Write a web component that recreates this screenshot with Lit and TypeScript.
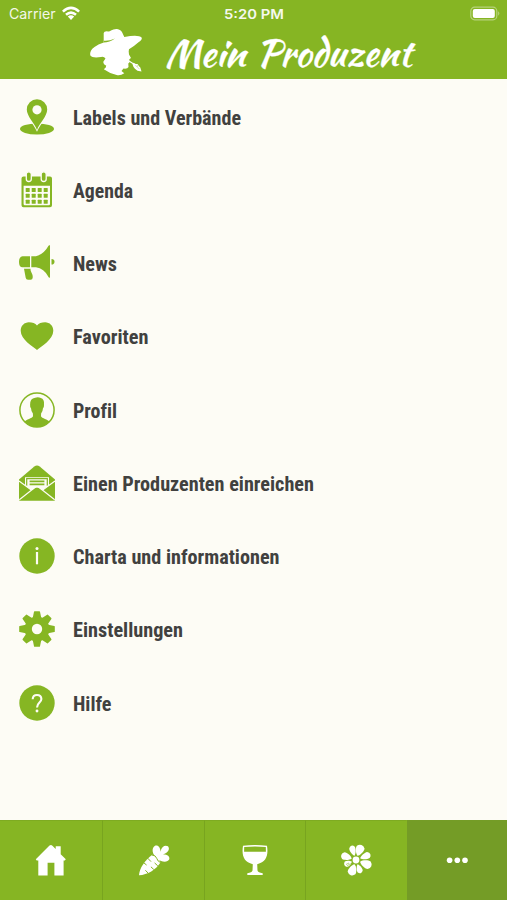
import { LitElement, html, css, svg } from "lit";
import { customElement } from "lit/decorators.js";
import { classMap } from "lit/directives/class-map.js";

const petal = (a: number, l: number, w: number) =>
  svg`<path transform=${`translate(16 16) rotate(${a})`} d=${`M0-4.5C${-w * 0.5}-5.8 ${-w}${-l * 0.68} ${-w * 0.85}${-l * 0.86}Q${-w * 0.5}${-l} 0${-l}Q${w * 0.5}${-l} ${w * 0.85}${-l * 0.86}C${w}${-l * 0.68} ${w * 0.5}-5.8 0-4.5z`}/>`;

const pin = svg`
  <ellipse cx="18" cy="30" rx="17" ry="5.500" fill="#86b623"/>
  <path d="M18 32.800C14.500 24.500 6.500 18 6.500 11.300a11.500 11.500 0 0 1 23 0C29.500 18 21.500 24.500 18 32.800z" fill="#fdfcf5"/>
  <path d="M18 31C15.500 24 7.800 17.500 7.800 10.600a10.200 10.300 0 0 1 20.400 0C28.200 17.500 20.500 24 18 31z" fill="#86b623"/>
  <circle cx="18" cy="10.800" r="4.600" fill="#fdfcf5"/>`;
const calendar = svg`
  <path fill-rule="evenodd" fill="#86b623" d="M5 4.500h26q2 0 2 2V33.300q0 2-2 2H4.500q-2 0-2-2V6.500q0-2 2-2zM4.600 13.700V32q0 1.200 1.200 1.200h24q1.200 0 1.200-1.200V13.700z"/>
  <g fill="#86b623" stroke="#fdfcf5" stroke-width="1.300"><rect x="7.300" y="-.2" width="5" height="9.700" rx="2.500"/><rect x="22.200" y="-.2" width="5" height="9.700" rx="2.500"/></g>
  ${[0, 1, 2].map((r) => [0, 1, 2, 3].map((c) => svg`<rect x=${6.7 + c * 6} y=${15.9 + r * 5.9} width="4" height="4" rx=".5" fill="#86b623"/>`))}`;
const megaphone = svg`<g fill="#86b623">
  <path d="M3.500 11.300H11v11H3.500Q0 22.300 0 17T3.500 11.300z"/>
  <path d="M12.300 11.300H17Q25 9.300 29.500.8Q30-.1 31 .3V32.500Q30 33 29.500 32Q25 23.300 17 22.300h-4.700z"/>
  <path d="M5 23.700h6.500c0 4 2.800 5.200 2.200 9q-.2 2-2 2H9q-2 0-2.300-2z"/>
  <path d="M32.500 14q3 0 3 2.800T32.500 19.600z"/></g>`;
const heart = svg`<path fill="#86b623" d="M18 32C14 28.500 1.700 21.500 1.700 12.700c0-5 3.700-8.500 8.200-8.500q5.400 0 8.100 3.300Q20.700 4.200 26.100 4.200c4.500 0 8.200 3.500 8.200 8.500C34.300 21.500 22 28.500 18 32z"/>`;
const profile = svg`
  <circle cx="18" cy="18" r="17.100" fill="#fdfcf5" stroke="#86b623" stroke-width="1.500"/>
  <path fill="#86b623" d="M5.500 29.800C7 27.300 13.300 26.500 14 24.300L13.900 21.600Q12.200 19.500 12 16.300 10.900 15.500 11.100 12.800 10.900 6.300 16.200 5.700 19.300 4.700 21.800 6.100 25.600 7 25 12.900 25.100 15.500 24 16.300 23.800 19.500 22.100 21.600L22 24.300C22.700 26.500 29 27.300 30.500 29.800 23.500 36.800 12.500 36.800 5.500 29.800z"/>`;
const envelope = svg`
  <path fill="#86b623" d="M0 14.500L15.300 1.600Q18-.6 20.700 1.600L36 14.500V35.500H0z"/>
  <path fill="#fdfcf5" d="M6 12.200H30V21.600L23 25.200H13L6 21.600z"/>
  <path fill="none" stroke="#86b623" stroke-width="1.200" d="M7.700 20.800v-7.200h20.600v7.200"/>
  <path stroke="#86b623" stroke-width="1.700" d="M10.600 16.300h14.800M10.600 19.400h14.800"/>
  <path fill="#86b623" d="M0 16L13 25.500 0 35zM36 16L23 25.500 36 35zM.5 35.500L15.500 23.200Q18 21.200 20.500 23.200L35.500 35.500z"/>
  <path fill="none" stroke="#fdfcf5" stroke-width="1.200" d="M0 16L12.700 25.300M36 16L23.300 25.300M.3 34.800L15.500 22.800Q18 20.800 20.500 22.800L35.700 34.800"/>`;
const info = svg`
  <circle cx="18" cy="18" r="17.700" fill="#86b623"/>
  <circle cx="18" cy="10.600" r="1.500" fill="#fdfcf5"/><path d="M18 14v12.300" stroke="#fdfcf5" stroke-width="2.200"/>`;
const gear = svg`<g fill="#86b623">
  ${[0, 45, 90, 135, 180, 225, 270, 315].map((a) => svg`<path transform=${`rotate(${a} 18 18)`} d="M13.500 8L15 .7Q15.100.2 15.600 .2h4.800q.5 0 .6.500L22.500 8z"/>`)}
  <circle cx="18" cy="18" r="12.400"/></g><circle cx="18" cy="18" r="5.200" fill="#fdfcf5"/>`;
const help = svg`
  <circle cx="18" cy="18" r="17.700" fill="#86b623"/>
  <path fill="none" stroke="#fdfcf5" stroke-width="2.100" d="M13.700 14.200Q13.800 10 18 10t4.400 4.100C22.400 17.500 18 17.700 18 22.400"/>
  <circle cx="18" cy="26" r="1.450" fill="#fdfcf5"/>`;

const home = svg`<path d="M.8 15.300L14.500 1.600Q16 .3 17.400 1.700l3.300 3.200V2.300h5v7.900L30.800 15.300l-1 1.200H28.600V31.500h-9.200V18.700h-6.800V31.500H3.300V16.500H1.700z"/>`;
const carrot = svg`
  <path d="M1 31.200C1.400 24.500 6.500 16.500 14.300 10.700Q20.500 11.500 22.500 18.500C18 25.500 9.500 31 1 31.200z"/>
  <path d="M19.500 14.500C13.500 10.500 13.500 3.800 17 1.800 20 .7 22.500 3.500 22.500 7.800 23.500 2.500 27 .8 30 2.300 32.500 5.500 29.500 9 25 10.500 29 10.300 32 12 31.300 15.300 29.500 18.800 23.500 18.500 19.500 14.500z"/>
  <g fill="none" stroke="#86b523" stroke-width="1" stroke-linecap="round"><path d="M14.200 11Q17.800 11.200 18.700 14.300T22.400 18.600M10 14.500l2.700 2.800M5.800 18.800l2.500 2M19.500 21.600l-2.600-2.400M15.500 25.200l-2.300-2.100M9.700 28.700l-2-2.100"/></g>`;
const wine = svg`
  <path fill-rule="evenodd" d="M4 1.700Q16 .5 28 1.700C29.500 11 27.500 18.300 18.200 20.200L18.500 26.500Q19 28.500 23.700 29.300V31H8.300V29.300Q13 28.500 13.500 26.500L13.800 20.200C4.500 18.300 2.500 11 4 1.700zM5.200 2.900L5.100 7.700H26.900L26.800 2.900Q16 2.200 5.200 2.900z"/>`;
const flower = svg`<circle cx="16" cy="16" r="3.400"/>
  ${petal(-18, 15, 3.5)}${petal(20, 16, 4.8)}${petal(68, 15.5, 3.9)}${petal(112, 16.5, 4.8)}${petal(160, 14, 3.3)}${petal(199, 16, 4.8)}${petal(247, 12.7, 3.4)}${petal(289, 15.6, 4.3)}
  <path d="M6 20.500l3-1.500M7 22l3.500-2.500" stroke="#86b523" stroke-width=".6"/>`;
const dots = svg`<circle cx="8.600" cy="16.200" r="2.800"/><circle cx="16.300" cy="16.200" r="2.800"/><circle cx="24" cy="16.200" r="2.800"/>`;

const rows = [
  { icon: pin, label: "Labels und Verbände", width: 168 },
  { icon: calendar, label: "Agenda", width: 60 },
  { icon: megaphone, label: "News", width: 44 },
  { icon: heart, label: "Favoriten", width: 75.5 },
  { icon: profile, label: "Profil", width: 44 },
  { icon: envelope, label: "Einen Produzenten einreichen", width: 241 },
  { icon: info, label: "Charta und informationen", width: 206.5 },
  { icon: gear, label: "Einstellungen", width: 110 },
  { icon: help, label: "Hilfe", width: 38.5 },
];
const tabs = [home, carrot, wine, flower, dots];

@customElement("app-root")
export class AppRoot extends LitElement {
  static styles = css`
    :host { display: block; }
    .screen { display: flex; flex-direction: column; width: 507px; height: 900px; overflow: hidden; background: #fdfcf5; }
    .header { flex: none; height: 79px; background: #86b523; color: #fff; }
    .status { display: grid; grid-template-columns: 1fr auto 1fr; align-items: center; height: 27px; padding: 0 7px 0 9px; box-sizing: border-box; }
    .carrier { display: flex; align-items: center; gap: 6px; }
    .status svg, .brand svg, .row svg, .tab svg { display: block; overflow: visible; }
    .battery { justify-self: end; }
    .small { font: 400 14px Inter, sans-serif; fill: #fff; opacity: .9; }
    .time { font: 600 13.5px Inter, sans-serif; fill: #fff; opacity: .92; }
    .brand { display: flex; gap: 22px; margin-top: 1px; padding-left: 89px; }
    .script { font: 400 37px "Kaushan Script", Lato, sans-serif; fill: #fff; stroke: #fff; stroke-width: .3px; }
    .list { flex: 1; padding-top: 1px; }
    .row { display: flex; align-items: center; height: 73.25px; padding-left: 19px; gap: 18px; }
    .label { font: 700 20px "Roboto Condensed", Roboto, sans-serif; font-variant-ligatures: none; fill: #41413f; }
    .tabs { flex: none; display: grid; grid-template-columns: 103px 102px 101px 101px 100px; height: 80.5px; background: #86b523; }
    .tab { display: flex; align-items: center; justify-content: center; box-sizing: border-box; border-right: 1px solid #78a41f; border-top: 1px solid #7eab21; fill: #fff; }
    .tab.plain { border-right-color: #86b523; }
    .tab.active { background: #749c26; border-color: #749c26; }
  `;

  render() {
    return html`<div class="screen">
      <div class="header">
        <div class="status">
          <div class="carrier">
            <svg width="47" height="20"><text class="small" x="0" y="15" textLength="46.500" lengthAdjust="spacingAndGlyphs">Carrier</text></svg>
            <svg width="18" height="14" viewBox="0 0 18 14" fill="none" stroke="#fff" stroke-width="2.600">
              <path d="M.9 4.600Q9-2.800 17.100 4.600M4 7.800Q9 3.400 14 7.800"/><path fill="#fff" stroke="none" d="M5.800 9.600Q9 7 12.200 9.600L9 12.900z"/>
            </svg>
          </div>
          <svg width="60" height="20"><text class="time" x="-1" y="15" textLength="60" lengthAdjust="spacingAndGlyphs">5:20 PM</text></svg>
          <svg class="battery" width="31" height="14" viewBox="0 0 31 14">
            <rect x="1.800" y=".2" width="26" height="12.600" rx="3.800" fill="none" stroke="#fff" stroke-opacity=".4" stroke-width="1.200"/>
            <rect x="3.800" y="2" width="22" height="9" rx="2" fill="#fff"/><path d="M29.300 4.300q2 2.200 0 4.400z" fill="#fff" fill-opacity=".5"/>
          </svg>
        </div>
        <div class="brand">
          <svg width="54" height="48" viewBox="0 0 54 48" fill="#fff">
            <path d="M14.700 12.500L14.700 5Q15 3.200 18 3.300Q20.500 4 22 2.500Q24.500 .7 28 .9Q32 1.500 33.200 4.500L35.300 9Q49.500 6.500 52.600 9.500Q53.700 11.500 49.500 14.300Q45.500 18 40 21.200L39.700 23.500L40 26.500L42 30L40.300 31.300L40.500 34.300L39.300 35.500L39.500 39Q38.500 41.200 34.500 40.600L32.500 43L35.300 45.300Q31.500 47.800 27.700 47Q20.500 45.500 14.800 41.300Q17.500 39.500 17.200 37.500Q14.300 36.500 14.300 33.700L16.500 30.500Q15 28.300 12 29Q3.500 30.500 1.200 27.300Q.5 22.500 5.500 19Q9 16 14.700 14.500z"/>
            <path d="M15 12.700Q20 13.200 26 10.500Q20.500 14.300 14.500 14.500z" fill="#86b523"/>
            <path d="M40 33L45.500 36.500" stroke="#fff" stroke-width="1.100"/>
            <path d="M43.500 36.200l1-1.500 2.300 1.200 1.700.2 1.500 2.200 1.300 1.200 1.200 4-4-.8-2.600-1.900-1.500-2z"/>
            <path d="M46.500 37.200l4 4M48.600 37.200l-.4 1.600" stroke="#86b523" stroke-width=".35"/>
          </svg>
          <svg width="252" height="48">
            <text class="script" transform="translate(0 38.500) rotate(-.2)" x="0" y="0" textLength="80.500" lengthAdjust="spacingAndGlyphs">Mein</text>
            <text class="script" transform="translate(91.500 38.300) rotate(-.2)" x="0" y="0" textLength="155" lengthAdjust="spacingAndGlyphs">Produzent</text>
          </svg>
        </div>
      </div>
      <div class="list">
        ${rows.map((r) => html`<div class="row">
          <svg width="36" height="36" viewBox="0 0 36 36">${r.icon}</svg>
          <svg width="250" height="30"><text class="label" x="0" y="22.600" textLength=${r.width} lengthAdjust="spacingAndGlyphs">${r.label}</text></svg>
        </div>`)}
      </div>
      <div class="tabs">
        ${tabs.map((t, i) => html`<div class=${classMap({ tab: true, plain: i === 3, active: i === 4 })}>
          <svg width="32" height="32" viewBox="0 0 32 32">${t}</svg>
        </div>`)}
      </div>
    </div>`;
  }
}
